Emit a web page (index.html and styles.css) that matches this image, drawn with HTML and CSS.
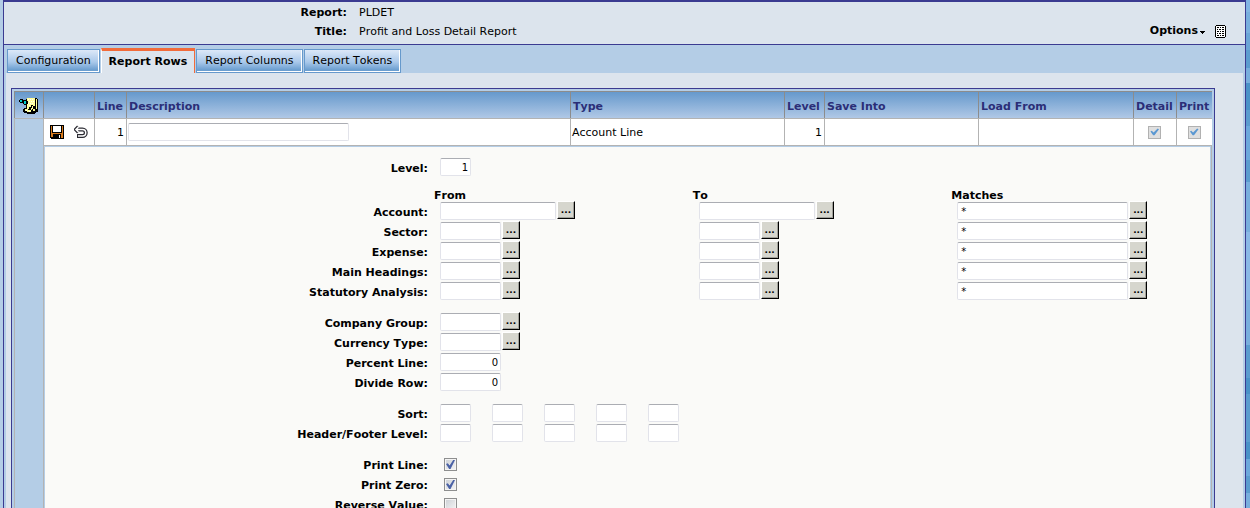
FILE: index.html
```
<!DOCTYPE html>
<html lang="en">
<head>
<meta charset="utf-8">
<title>Profit and Loss Detail Report</title>
<link rel="stylesheet" href="styles.css">
</head>
<body>
<div class="window">
  <header class="head">
    <dl class="facts">
      <dt>Report:</dt><dd>PLDET</dd>
      <dt>Title:</dt><dd>Profit and Loss Detail Report</dd>
    </dl>
    <div class="tools">
      <button class="options" type="button">Options<svg width="5" height="3" viewBox="0 0 5 3" shape-rendering="crispEdges"><path d="M0 0h5v1h-1v1h-1v1h-1v-1h-1v-1h-1z"/></svg></button>
      <button class="icon" type="button" aria-label="Document"><svg width="11" height="13" viewBox="0 0 11 13" shape-rendering="crispEdges"><path d="M1 0h9v1h1v11h-1v1h-9v-1h-1v-11h1z"/><path fill="#fff" d="M1 1h9v11h-9z"/><path d="M2 2h2v1h-2zM5 2h1v1h-1zM7 2h2v1h-2zM2 4h1v1h-1zM4 4h2v1h-2zM7 4h2v1h-2zM2 6h2v1h-2zM5 6h1v1h-1zM7 6h2v1h-2zM2 8h1v1h-1zM4 8h2v1h-2zM7 8h2v1h-2zM2 10h2v1h-2zM5 10h1v1h-1zM7 10h2v1h-2z"/></svg></button>
    </div>
  </header>
  <nav class="tabs">
    <a class="tab" href="#configuration">Configuration</a>
    <a class="tab active" href="#rows" aria-current="page">Report Rows</a>
    <a class="tab" href="#columns">Report Columns</a>
    <a class="tab" href="#tokens">Report Tokens</a>
  </nav>
  <main class="content">
    <div class="frame">
      <table class="rows">
        <colgroup><col class="w-note"><col class="w-act"><col class="w-line"><col><col class="w-type"><col class="w-level"><col class="w-save"><col class="w-load"><col class="w-detail"><col class="w-print"></colgroup>
        <thead>
          <tr>
            <th><button class="icon" type="button" aria-label="Add note"><svg width="20" height="17" viewBox="0 0 20 17" shape-rendering="crispEdges"><path d="M8 1h10v1h1v13h-2v1h-1v1h-8v-1h-3v-1h-1v-3h1v-1h2v-9h1z"/><path fill="#ffff99" d="M8 1h8v8h-2v-1h-2v2h-2v2h-2zM6 12h3v1h3v2h-4v-1h-2z"/><path fill="#ffff99" d="M17 2h1v10h-1zM12 11h1v2h-1zM13 9h1v3h-1zM14 12h2v2h-2z"/><path fill="#fff" d="M9 2h1v1h-1zM11 2h1v1h-1zM13 2h1v1h-1zM10 4h1v1h-1zM12 4h1v1h-1zM14 4h1v1h-1zM9 6h1v1h-1zM11 6h1v1h-1zM13 6h1v1h-1zM10 8h1v1h-1zM7 13h1v1h-1zM10 14h1v1h-1z"/><path d="M1 2h3v1h4v1h1v3h-1v1h-3v-1h-1v-1h-3v-1h-1v-2h1z"/><path fill="#0cc" d="M1 3h2v2h-2zM5 4h2v3h-2z"/></svg></button></th>
            <th></th>
            <th>Line</th><th>Description</th><th>Type</th><th>Level</th><th>Save Into</th><th>Load From</th><th>Detail</th><th>Print</th>
          </tr>
        </thead>
        <tbody>
          <tr class="row">
            <td class="side" rowspan="2"></td>
            <td><div class="actions">
              <button class="icon" type="button" aria-label="Save"><svg width="14" height="14" viewBox="0 0 14 14" shape-rendering="crispEdges"><path d="M0 0h14v14h-13v-1h-1z"/><path fill="#d87a1c" d="M1 1h1v11h-1zM12 1h1v12h-1zM2 8h10v1h-10zM2 9h1v3h-1zM11 9h1v4h-1z"/><path fill="#fff" d="M3 1h8v6h-8zM9 10h1v3h-1z"/></svg></button>
              <button class="icon" type="button" aria-label="Undo"><svg width="14" height="14" viewBox="0 0 14 14"><path fill="none" stroke="#2b2b33" stroke-width="4" d="M2.500 4.500h6a3.200 3.200 0 0 1 0 6.500h-5.500M4.500 2L2 4.500l2.500 2.500"/><path fill="none" stroke="#fff" stroke-width="1.500" d="M2 4.500h6.500a3.200 3.200 0 0 1 0 6.500h-4.500M4.500 2L2 4.500l2.500 2.500"/></svg></button>
            </div></td>
            <td class="num">1</td>
            <td><input class="text desc" type="text" aria-label="Description"></td>
            <td class="type">Account Line</td>
            <td class="num">1</td>
            <td></td><td></td>
            <td class="mid"><input class="check" type="checkbox" aria-label="Detail" checked disabled></td>
            <td class="mid"><input class="check" type="checkbox" aria-label="Print" checked disabled></td>
          </tr>
          <tr>
            <td class="editor" colspan="9">
              <form class="form">
                <div class="group">
                  <label for="level">Level:</label>
                  <div class="field"><input id="level" class="text tiny num" type="text" value="1"></div>
                </div>
                <div class="group titled">
                  <b class="title first">From</b><b class="title">To</b><b class="title">Matches</b>
                  <label for="account">Account:</label>
                  <div class="field"><input id="account" class="text medium" type="text"><button class="pick" type="button">...</button></div>
                  <div class="field"><input aria-label="Account to" class="text medium" type="text"><button class="pick" type="button">...</button></div>
                  <div class="field"><input aria-label="Account matches" class="text long" type="text" value="*"><button class="pick" type="button">...</button></div>
                  <label for="sector">Sector:</label>
                  <div class="field"><input id="sector" class="text short" type="text"><button class="pick" type="button">...</button></div>
                  <div class="field"><input aria-label="Sector to" class="text short" type="text"><button class="pick" type="button">...</button></div>
                  <div class="field"><input aria-label="Sector matches" class="text long" type="text" value="*"><button class="pick" type="button">...</button></div>
                  <label for="expense">Expense:</label>
                  <div class="field"><input id="expense" class="text short" type="text"><button class="pick" type="button">...</button></div>
                  <div class="field"><input aria-label="Expense to" class="text short" type="text"><button class="pick" type="button">...</button></div>
                  <div class="field"><input aria-label="Expense matches" class="text long" type="text" value="*"><button class="pick" type="button">...</button></div>
                  <label for="headings">Main Headings:</label>
                  <div class="field"><input id="headings" class="text short" type="text"><button class="pick" type="button">...</button></div>
                  <div class="field"><input aria-label="Main Headings to" class="text short" type="text"><button class="pick" type="button">...</button></div>
                  <div class="field"><input aria-label="Main Headings matches" class="text long" type="text" value="*"><button class="pick" type="button">...</button></div>
                  <label for="statutory">Statutory Analysis:</label>
                  <div class="field"><input id="statutory" class="text short" type="text"><button class="pick" type="button">...</button></div>
                  <div class="field"><input aria-label="Statutory Analysis to" class="text short" type="text"><button class="pick" type="button">...</button></div>
                  <div class="field"><input aria-label="Statutory Analysis matches" class="text long" type="text" value="*"><button class="pick" type="button">...</button></div>
                </div>
                <div class="group">
                  <label for="company">Company Group:</label>
                  <div class="field wide"><input id="company" class="text short" type="text"><button class="pick" type="button">...</button></div>
                  <label for="currency">Currency Type:</label>
                  <div class="field wide"><input id="currency" class="text short" type="text"><button class="pick" type="button">...</button></div>
                  <label for="percent">Percent Line:</label>
                  <div class="field wide"><input id="percent" class="text short num" type="text" value="0"></div>
                  <label for="divide">Divide Row:</label>
                  <div class="field wide"><input id="divide" class="text short num" type="text" value="0"></div>
                </div>
                <div class="group">
                  <label for="sort">Sort:</label>
                  <div class="field wide spread"><input id="sort" class="text tiny" type="text"><input aria-label="Sort 2" class="text tiny" type="text"><input aria-label="Sort 3" class="text tiny" type="text"><input aria-label="Sort 4" class="text tiny" type="text"><input aria-label="Sort 5" class="text tiny" type="text"></div>
                  <label for="hf">Header/Footer Level:</label>
                  <div class="field wide spread"><input id="hf" class="text tiny" type="text"><input aria-label="Header/Footer Level 2" class="text tiny" type="text"><input aria-label="Header/Footer Level 3" class="text tiny" type="text"><input aria-label="Header/Footer Level 4" class="text tiny" type="text"><input aria-label="Header/Footer Level 5" class="text tiny" type="text"></div>
                </div>
                <div class="group">
                  <label for="print-line">Print Line:</label>
                  <div class="field wide ticks"><input id="print-line" class="check" type="checkbox" checked></div>
                  <label for="print-zero">Print Zero:</label>
                  <div class="field wide ticks"><input id="print-zero" class="check" type="checkbox" checked></div>
                  <label for="reverse">Reverse Value:</label>
                  <div class="field wide ticks"><input id="reverse" class="check" type="checkbox"></div>
                </div>
              </form>
            </td>
          </tr>
        </tbody>
      </table>
    </div>
  </main>
</div>
</body>
</html>
```
FILE: styles.css
```
* { box-sizing: border-box; }

html {
  scrollbar-width: none;
  background: linear-gradient(#82b4e2 0 12px, #78aedd 12px 33px, #6ba5d6 33px 50px, #5b9ccf 50px 68px, #78aedd 68px 83px, #4a92c8 83px 110px, #5b9ccf 110px 126px, #6ca8dc 126px 160px, #5b9ccf 160px 182px, #78aedd 182px 232px, #8ab8e6 232px 300px, #78aedd 300px 345px, #5b9ccf 345px 378px, #4a92c8 378px 394px, #5b9ccf 394px 442px, #4a92c8 442px 459px, #6ca8dc 459px 476px, #5b9ccf 476px 493px, #78aedd 493px);
}

body {
  margin: 0;
  padding: 0 4px 0 0;
  font: 11px/14px Verdana, "DejaVu Sans", sans-serif;
  font-kerning: none;
  color: #000;
  background: linear-gradient(90deg, #b4cde6 50%, transparent 50%);
}

input, button { font: inherit; font-kerning: none; color: inherit; margin: 0; }

.window {
  min-height: 100vh;
  margin-left: 3px;
  border: solid #3b3b91;
  border-width: 2px 1px 0;
  background: #b4cde6;
}

.head {
  display: flex;
  justify-content: space-between;
  align-items: flex-end;
  padding: 4px 19px 5px 0;
  background: #dce4ed;
  border-bottom: 1px solid #3b3b91;
}

.facts {
  display: grid;
  grid-template-columns: 343px auto;
  gap: 5px 12px;
  margin: 0;
}
.facts dt { text-align: right; font-weight: bold; }
.facts dd { margin: 0; }

.tools { display: flex; align-items: center; gap: 10px; padding-bottom: 1px; }

.options {
  display: flex;
  align-items: center;
  padding: 0;
  border: 0;
  background: none;
  font-weight: bold;
}
.options svg { margin-top: 3px; margin-left: 2px; }

.icon {
  display: block;
  padding: 0;
  border: 0;
  background: none;
}
.icon svg { display: block; }

.tabs {
  display: flex;
  gap: 1px;
  padding: 3px 0 0 3px;
}

.tab {
  height: 24px;
  margin-top: 1px;
  padding: 4px 8px 0;
  border: 1px solid #6699cc;
  box-shadow: inset -1px -1px #fff;
  background: linear-gradient(#dce8f8, #a9c8ea 55%, #6c9fd0 90%);
  color: #000;
  text-decoration: none;
}

.tab.active {
  height: 25px;
  margin-top: 0;
  padding: 4px 7px 0;
  border: solid #f26b3a;
  border-width: 3px 1px 0;
  border-left-color: #fff;
  box-shadow: none;
  background: #dce4ed;
  font-weight: bold;
}

.content {
  margin: 0 2px;
  padding: 15px 28px 15px 5px;
  background: #dce4ed;
}

.frame {
  padding: 2px;
  border: 1px solid #3b3b91;
  background: #b4cde6;
}

.rows {
  width: 100%;
  table-layout: fixed;
  border-spacing: 0;
}
.w-note { width: 29px; }
.w-act { width: 51px; }
.w-line { width: 32px; }
.w-type { width: 214px; }
.w-level { width: 40px; }
.w-save { width: 154px; }
.w-load { width: 155px; }
.w-detail { width: 43px; }
.w-print { width: 36px; }

.rows th {
  height: 27px;
  padding: 3px 0 0 2px;
  border: solid #8c8c8c;
  border-width: 1px 0 0 1px;
  background: linear-gradient(#6699cc, #b0c8e6);
  color: #2b2e77;
  text-align: left;
  white-space: nowrap;
}
.rows th:first-child { padding: 0 0 0 4px; }

.rows td {
  padding: 0;
  border: solid #b3b3b3;
  border-width: 1px 0 0 1px;
}
.row td { height: 27px; background: #fff; }
.rows .side { background: #b4cde6; }
.rows .num { padding-right: 2px; text-align: right; }
.rows td.num, .rows .type { padding-top: 1px; }
.rows .type { padding-left: 1px; }
.rows .mid { padding-right: 1px; }
.mid .check { margin: 0 auto; }

.actions { display: flex; gap: 10px; padding-left: 6px; }

.rows .editor { border-right-width: 1px; }

.form {
  display: grid;
  gap: 11px;
  padding: 10px 0 16px 1px;
  border: solid #b4cde6;
  border-width: 1px 1px 0;
  background: #fafaf8;
}

.group {
  display: grid;
  grid-template-columns: 3fr 2fr 2fr 2fr;
  grid-auto-rows: 20px;
}
.titled { grid-template-rows: 13px; }
.group label {
  padding: 5px 6px 0 0;
  text-align: right;
  font-weight: bold;
}
.title { line-height: 15px; }
.title.first { grid-column: 2; }

.field {
  display: flex;
  align-items: flex-start;
  gap: 1px;
  padding-left: 6px;
}
.wide { grid-column: 2 / -1; }
.spread { gap: 21px; }
.ticks { padding: 4px 0 0 10px; }

.text {
  display: block;
  height: 18px;
  padding: 0 3px;
  border: 1px solid #e2e3ea;
  border-top-color: #abadb3;
  border-radius: 2px;
  background: #fff;
  font-size: 10px;
}
.field .text { margin-top: 1px; }
.desc { width: 221px; margin-left: 1px; }
.tiny { width: 31px; }
.short { width: 61px; }
.medium { width: 116px; }
.long { width: 171px; }

.pick {
  width: 18px;
  height: 18px;
  padding: 0;
  border: 1px solid #000;
  border-color: #fff #000 #000 #fff;
  box-shadow: inset -1px -1px #a0a09a;
  background: #d6d6ce;
  font-size: 9px;
  line-height: 16px;
  font-weight: bold;
}

.check {
  appearance: none;
  display: block;
  width: 13px;
  height: 13px;
  border: 1px solid #8e8f8f;
  box-shadow: inset 0 0 0 1px #f4f4f4;
  background: linear-gradient(135deg, #cbcfd5, #f6f6f6);
}
.check:checked::before {
  content: "";
  display: block;
  width: 9px;
  height: 9px;
  margin: 1px;
  background: #4b62a6;
  clip-path: polygon(0 45%, 20% 35%, 40% 60%, 80% 0, 100% 0, 50% 100%, 35% 100%);
}
.check:disabled {
  border-color: #b1b1b1;
  box-shadow: none;
  background: #dfdfdf;
}
.check:disabled::before {
  background: #5b98d2;
  clip-path: polygon(5% 45%, 20% 35%, 40% 55%, 85% 10%, 100% 20%, 50% 85%, 35% 85%);
}
```
